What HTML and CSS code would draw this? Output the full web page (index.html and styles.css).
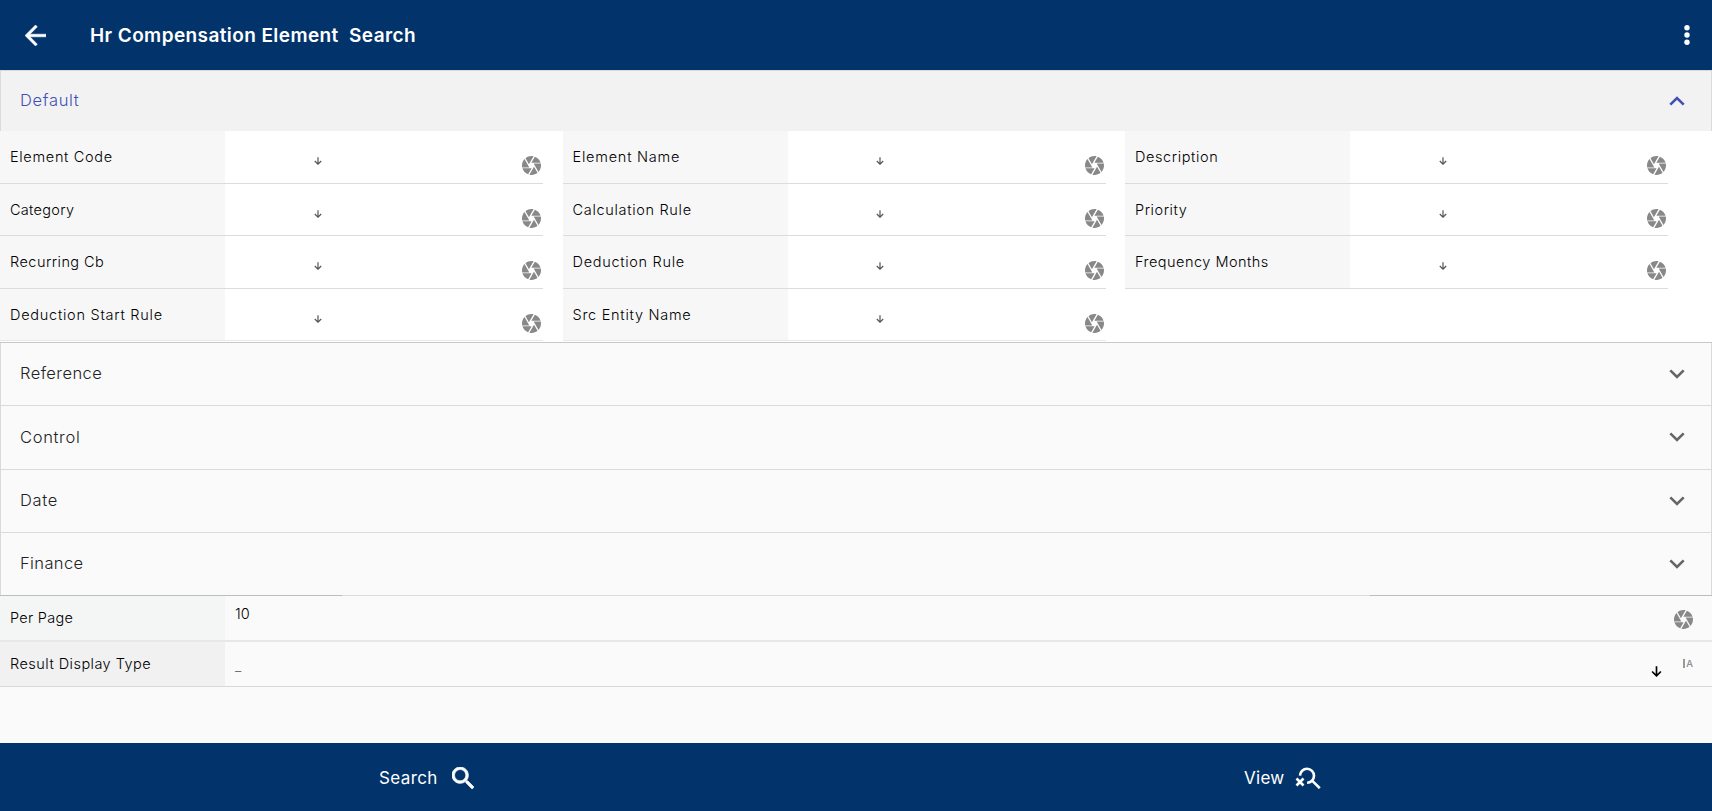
FILE: index.html
```
<!DOCTYPE html>
<html lang="en">
<head>
<meta charset="utf-8">
<title>Hr Compensation Element Search</title>
<link rel="stylesheet" href="styles.css">
</head>
<body>
<svg width="0" height="0" class="defs">
  <symbol id="camera" viewBox="2 2 20 20"><path d="M9.4 10.5l4.77-8.26C13.47 2.09 12.75 2 12 2c-2.4 0-4.6.85-6.32 2.25l3.66 6.35.06-.1zM21.54 9c-.92-2.92-3.15-5.26-6-6.34L11.88 9h9.66zm.26 1h-7.49l.29.5 4.76 8.25C21 16.97 22 14.61 22 12c0-.69-.07-1.35-.2-2zM8.54 12l-3.9-6.75C3.01 7.03 2 9.39 2 12c0 .69.07 1.35.2 2h7.49l-1.15-2zm-6.08 3c.92 2.92 3.15 5.26 6 6.34L12.12 15H2.46zm11.27 0l-3.9 6.76c.7.15 1.42.24 2.17.24 2.4 0 4.6-.85 6.32-2.25l-3.66-6.35-.93 1.6z"/></symbol>
  <symbol id="down" viewBox="0 0 10 10"><path d="M5 .3v8.6M1 5l4 4 4-4" fill="none" stroke="currentColor" stroke-width="1.5"/></symbol>
  <symbol id="chevron" viewBox="0 0 16 10"><path d="M1.3 1.3L8 8l6.700-6.700" fill="none" stroke="currentColor" stroke-width="2.600"/></symbol>
</svg>
<header class="topbar">
  <svg class="back" viewBox="4 4 16 16"><path d="M20 11H7.830l5.590-5.590L12 4l-8 8 8 8 1.410-1.410L7.830 13H20v-2z" stroke="#fff" stroke-width=".4"/></svg>
  <h1 class="title">Hr Compensation Element&nbsp; Search</h1>
  <svg class="more" viewBox="0 0 6 20"><circle cx="3" cy="2.700" r="2.700"/><circle cx="3" cy="10" r="2.700"/><circle cx="3" cy="17.300" r="2.700"/></svg>
</header>
<main class="content">
  <section class="panel-head open"><span class="t-default">Default</span><svg class="chev up"><use href="#chevron"/></svg></section>
  <section class="fields">
    <div class="field"><label class="w-a">Element Code</label><div class="value"><svg class="arrow"><use href="#down"/></svg><svg class="cam"><use href="#camera"/></svg></div></div>
    <div class="field"><label class="w-b">Element Name</label><div class="value"><svg class="arrow"><use href="#down"/></svg><svg class="cam"><use href="#camera"/></svg></div></div>
    <div class="field"><label class="w-c">Description</label><div class="value"><svg class="arrow"><use href="#down"/></svg><svg class="cam"><use href="#camera"/></svg></div></div>
    <div class="field"><label class="w-d">Category</label><div class="value"><svg class="arrow"><use href="#down"/></svg><svg class="cam"><use href="#camera"/></svg></div></div>
    <div class="field"><label class="w-e">Calculation Rule</label><div class="value"><svg class="arrow"><use href="#down"/></svg><svg class="cam"><use href="#camera"/></svg></div></div>
    <div class="field"><label class="w-f">Priority</label><div class="value"><svg class="arrow"><use href="#down"/></svg><svg class="cam"><use href="#camera"/></svg></div></div>
    <div class="field"><label class="w-g">Recurring Cb</label><div class="value"><svg class="arrow"><use href="#down"/></svg><svg class="cam"><use href="#camera"/></svg></div></div>
    <div class="field"><label class="w-h">Deduction Rule</label><div class="value"><svg class="arrow"><use href="#down"/></svg><svg class="cam"><use href="#camera"/></svg></div></div>
    <div class="field"><label class="w-i">Frequency Months</label><div class="value"><svg class="arrow"><use href="#down"/></svg><svg class="cam"><use href="#camera"/></svg></div></div>
    <div class="field last"><label class="w-j">Deduction Start Rule</label><div class="value"><svg class="arrow"><use href="#down"/></svg><svg class="cam"><use href="#camera"/></svg></div></div>
    <div class="field last"><label class="w-k">Src Entity Name</label><div class="value"><svg class="arrow"><use href="#down"/></svg><svg class="cam"><use href="#camera"/></svg></div></div>
  </section>
  <section class="panels">
    <div class="panel-head"><span class="t-reference">Reference</span><svg class="chev"><use href="#chevron"/></svg></div>
    <div class="panel-head"><span class="t-control">Control</span><svg class="chev"><use href="#chevron"/></svg></div>
    <div class="panel-head"><span class="t-date">Date</span><svg class="chev"><use href="#chevron"/></svg></div>
    <div class="panel-head"><span class="t-finance">Finance</span><svg class="chev"><use href="#chevron"/></svg></div>
  </section>
  <div class="edge"><i></i><i></i></div>
  <section class="row per-page"><label class="w-l">Per Page</label><div class="row-value"><span class="ten">10</span><svg class="cam"><use href="#camera"/></svg></div></section>
  <section class="row result"><label class="w-m">Result Display Type</label><div class="row-value"><span class="dash">_</span><svg class="select"><use href="#down"/></svg><span class="type"><i></i>A</span></div></section>
</main>
<footer class="actions">
  <div class="action"><span class="t-search">Search</span><svg viewBox="3 3 17.500 17.500"><path stroke="#fff" stroke-width=".6" d="M15.500 14h-.79l-.28-.27C15.410 12.590 16 11.110 16 9.500 16 5.910 13.090 3 9.500 3S3 5.910 3 9.500 5.910 16 9.500 16c1.610 0 3.090-.59 4.230-1.570l.27.28v.79l5 4.990L20.490 19l-4.990-5zm-6 0C7.010 14 5 11.990 5 9.500S7.010 5 9.500 5 14 7.010 14 9.500 11.990 14 9.500 14z"/></svg></div>
  <div class="action view"><span class="t-view">View</span><svg viewBox="0 0 26 22"><path d="M5 8.600a7 7 0 1 1 7.100 7.200M17.100 13.600l7.700 7.600M1.500 11.500l7 7M8.500 11.500l-7 7" fill="none" stroke="#fff" stroke-width="2.600"/></svg></div>
</footer>
</body>
</html>
```
FILE: styles.css
```
* { box-sizing: border-box; }
body {
  margin: 0;
  height: 811px;
  display: flex;
  flex-direction: column;
  overflow: hidden;
  background: #fafafa;
  color: #000;
  font-family: Inter, Roboto, sans-serif;
  font-weight: 300;
}
svg { display: block; flex: none; fill: currentColor; }
.defs { position: absolute; }
.topbar {
  height: 70px;
  flex: none;
  display: flex;
  align-items: center;
  padding: 0 22px 0 25px;
  background: #02346b;
  color: #fff;
}
.back { width: 21px; height: 21px; }
.title {
  margin: 0 auto 0 44px;
  font-size: 19px;
  font-weight: 600;
  letter-spacing: .41px;
  white-space: nowrap;
}
.more { width: 6px; height: 20px; }
.content { flex: 1; }
.panel-head {
  height: 63.250px;
  display: flex;
  align-items: center;
  justify-content: space-between;
  padding: 0 26px 0 19px;
  border: solid #dadada;
  border-width: 0 1px 1px;
  color: #222;
  font-size: 16.500px;
}
.panel-head span { padding-bottom: 1px; }
.panel-head.open {
  height: 61px;
  border-width: 1px 1px 0;
  background: #f2f2f2;
  color: #3f51b5;
}
.panel-head .t-default { letter-spacing: .68px; padding-bottom: 3px; }
.t-reference { letter-spacing: .42px; }
.t-control { letter-spacing: .67px; }
.t-date { letter-spacing: .7px; }
.t-finance { letter-spacing: .38px; }
.panel-head .t-reference { padding-bottom: 2px; }
.chev { width: 16px; height: 10px; color: #666; }
.up { transform: rotate(180deg); color: #3f51b5; }
.fields {
  display: grid;
  grid-template-columns: repeat(3, 543px);
  grid-auto-rows: 52.500px;
  column-gap: 19.500px;
  height: 212px;
  background: #fff;
  border-bottom: 1px solid #c8c8c8;
}
.field {
  display: flex;
  border-bottom: 1px solid #d8dddf;
}
.field.last { border-color: #e8e8e8; }
.field label {
  width: 225px;
  padding: 17px 0 0 10px;
  background: #f7f7f7;
  font-size: 14.500px;
  line-height: 18px;
  white-space: nowrap;
}
.w-a { letter-spacing: .68px; }
.w-b { letter-spacing: .77px; }
.w-c { letter-spacing: .6px; }
.w-d { letter-spacing: .29px; }
.w-e { letter-spacing: .68px; }
.w-f { letter-spacing: .55px; }
.w-g { letter-spacing: .46px; }
.w-h { letter-spacing: .7px; }
.w-i { letter-spacing: .48px; }
.w-j { letter-spacing: .74px; }
.w-k { letter-spacing: .73px; }
.w-l { letter-spacing: .28px; }
.w-m { letter-spacing: .46px; }
.value {
  flex: 1;
  display: flex;
  justify-content: space-between;
  padding: 25px 2px 0 88.500px;
}
.arrow { width: 8px; height: 8px; margin-top: 1px; color: #555; }
.cam { width: 19px; height: 19px; color: #888; }
.edge {
  height: 1px;
  margin-top: -1px;
  display: flex;
  justify-content: space-between;
}
.edge i { width: 342px; background: #bdbdbd; }
.row {
  height: 45.500px;
  display: flex;
  border-bottom: 1px solid #d4dade;
}
.row label {
  width: 225px;
  display: flex;
  align-items: center;
  padding-left: 10px;
  background: #f4f6f5;
  font-size: 14.500px;
}
.row.result { height: 45px; }
.result label { background: #f1f1f1; }
.per-page { border-bottom: 2px solid #e4e8eb; }
.row-value {
  flex: 1;
  display: flex;
  padding: 0 19px 0 10px;
}
.ten { margin: 9px auto 0 0; font-size: 14.500px; line-height: 18px; }
.per-page .cam { margin-top: 14px; }
.dash { margin: 15px auto 0 0; font-size: 14px; color: #666; }
.select { width: 11px; height: 11px; margin: 24px 21px 0 0; }
.type {
  display: flex;
  align-items: center;
  gap: 1.500px;
  height: 10px;
  margin-top: 17px;
  color: #888;
  font-size: 9.500px;
  font-weight: 500;
}
.type i { width: 2px; height: 9px; background: #999; }
.actions {
  height: 68px;
  flex: none;
  display: grid;
  grid-template-columns: 1fr 1fr;
  background: #02346b;
  color: #fff;
}
.action {
  display: flex;
  align-items: center;
  padding: 2px 0 0 379px;
  gap: 14px;
  font-size: 17px;
  font-weight: 400;
}
.t-search { letter-spacing: .38px; }
.t-view { letter-spacing: .3px; }
.action svg { width: 22px; height: 22px; }
.action.view { padding-left: 388px; gap: 10.500px; }
.action.view svg { width: 26px; }
```
